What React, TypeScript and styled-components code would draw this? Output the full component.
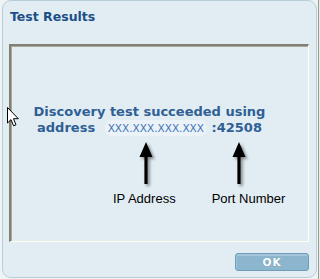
import React from "react";
import styled, { createGlobalStyle } from "styled-components";

const Global = createGlobalStyle`
  html, body { margin: 0; padding: 0; }
  body {
    width: 320px;
    height: 279px;
    overflow: hidden;
    background: linear-gradient(to right, #eef3f6 0, #eef3f6 318px, #9a9d8c 318px, #9a9d8c 319px, #e6ecee 319px);
    font-family: "DejaVu Sans", Verdana, sans-serif;
  }
`;

const Page = styled.div`
  position: relative;
  width: 320px;
  height: 279px;
`;

const Dialog = styled.div`
  box-sizing: border-box;
  margin-left: 2px;
  width: 315px;
  height: 278px;
  border: 1px solid #b9cdd8;
  border-radius: 9px;
  background: #e1edf3;
  display: flex;
  flex-direction: column;
  padding: 8px 7px 6px 6px;
`;

const Title = styled.div`
  font-family: "DejaVu Sans", Verdana, sans-serif;
  font-weight: bold;
  font-size: 12.5px;
  line-height: 15px;
  color: #1d4f86;
  padding-left: 1px;
`;

const Panel = styled.div`
  box-sizing: border-box;
  margin-top: 20px;
  height: 199px;
  border-style: solid;
  border-width: 2px 1px 1px 2px;
  border-color: #7f7f72 #ffffff #fffdf0 #7f7f72;
  box-shadow: inset 1px 1px 0 #a9a99e;
  display: flex;
  flex-direction: column;
  align-items: flex-start;
  padding-top: 58px;
`;

const Message = styled.div`
  align-self: stretch;
  padding-right: 20px;
  text-align: center;
  font-family: "DejaVu Sans", Verdana, sans-serif;
  font-weight: bold;
  font-size: 13px;
  line-height: 16px;
  color: #2f5f95;
`;

const Address = styled.span`
  display: inline-block;
  margin-left: 5px;
  padding: 0 3px;
  border-radius: 7px;
  background: #ebf3f8;
  font-weight: normal;
  font-size: 10.5px;
  color: #3f74ba;
`;

const Callouts = styled.div`
  display: flex;
  gap: 36px;
  margin-top: 5px;
  padding-left: 102px;
`;

const Callout = styled.div<{ $arrowOffset: number }>`
  display: flex;
  flex-direction: column;
  align-items: flex-start;
  gap: 4px;

  & > svg {
    margin-left: ${(p) => p.$arrowOffset}px;
    filter: drop-shadow(2px 2px 1.5px rgba(0, 0, 0, 0.45));
  }
`;

const Label = styled.div`
  font-family: "Liberation Sans", Arial, sans-serif;
  font-size: 13px;
  line-height: 15px;
  color: #000;
  white-space: nowrap;
`;

const Footer = styled.div`
  display: flex;
  justify-content: flex-end;
  margin-top: 11px;
`;

const OkButton = styled.button`
  box-sizing: border-box;
  width: 74px;
  height: 18px;
  padding: 0;
  border: 1px solid #6f9ebb;
  border-radius: 3px;
  background: #8cb6ce;
  box-shadow: inset 0 2px 0 #a3c6da, inset 1px 0 0 #9ec2d6;
  font-family: "DejaVu Sans", Verdana, sans-serif;
  font-weight: bold;
  font-size: 10.5px;
  letter-spacing: 1px;
  color: #ffffff;
  text-shadow: 0 0 1px #6b8fa6;
  display: flex;
  align-items: center;
  justify-content: center;
`;

const Cursor = styled.svg`
  position: absolute;
  left: 7px;
  top: 107px;
`;

const Arrow = () => (
  <svg width="18" height="46" viewBox="0 0 18 46">
    <path d="M8 1 L14.5 16 L9.6 16 L9.6 43 L6.4 43 L6.4 16 L1.5 16 Z" fill="#000" />
  </svg>
);

export default function App() {
  return (
    <Page>
      <Global />
      <Dialog>
        <Title>Test Results</Title>
        <Panel>
          <Message>
            Discovery test succeeded using
            <br />
            address <Address>XXX.XXX.XXX.XXX</Address> :42508
          </Message>
          <Callouts>
            <Callout $arrowOffset={25}>
              <Arrow />
              <Label>IP Address</Label>
            </Callout>
            <Callout $arrowOffset={19}>
              <Arrow />
              <Label>Port Number</Label>
            </Callout>
          </Callouts>
        </Panel>
        <Footer>
          <OkButton>OK</OkButton>
        </Footer>
      </Dialog>
      <Cursor width="13" height="20" viewBox="0 0 13 20">
        <path
          d="M0.5 0.5 L0.5 16 L4 12.6 L6.6 18.8 L9 17.8 L6.5 11.7 L11.3 11.7 Z"
          fill="#fff"
          stroke="#000"
          strokeWidth="1"
          strokeLinejoin="miter"
        />
      </Cursor>
    </Page>
  );
}
